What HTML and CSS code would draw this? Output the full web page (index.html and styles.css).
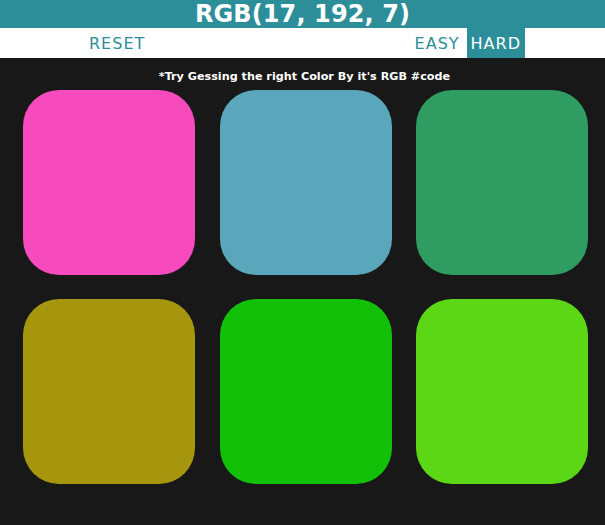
FILE: index.html
```html
<!DOCTYPE html>
<html>
<head>
<meta charset="utf-8">
<link rel="stylesheet" href="styles.css">
</head>
<body>
<h1 class="title">RGB(17, 192, 7)</h1>
<nav class="nav">
  <div class="nav-left"><button class="btn">RESET</button></div>
  <div class="nav-right">
    <button class="btn">EASY</button>
    <button class="btn selected">HARD</button>
  </div>
</nav>
<p class="hint">*Try Gessing the right Color By it's RGB #code</p>
<div class="grid">
  <div class="square sq-pink"></div>
  <div class="square sq-blue"></div>
  <div class="square sq-green"></div>
  <div class="square sq-olive"></div>
  <div class="square sq-answer"></div>
  <div class="square sq-lime"></div>
</div>
</body>
</html>
```
FILE: styles.css
```css
* { box-sizing: border-box; }
html, body { margin: 0; padding: 0; }
body {
  background: #181818;
  font-family: "DejaVu Sans", sans-serif;
  width: 605px;
  height: 525px;
  overflow: hidden;
}
.title {
  margin: 0;
  height: 28px;
  line-height: 28px;
  background: #2c8e99;
  color: #fff;
  font-size: 24px;
  font-weight: bold;
  text-align: center;
  letter-spacing: 0.1px;
}
.nav {
  height: 30px;
  background: #fff;
  display: flex;
  justify-content: space-between;
}
.nav-left { padding-left: 85px; display: flex; }
.nav-right { padding-right: 80px; display: flex; gap: 3px; }
.btn {
  border: none;
  background: #fff;
  color: #2c8e99;
  font-family: "DejaVu Sans", sans-serif;
  font-size: 16px;
  letter-spacing: 1px;
  padding: 0 4px;
  height: 30px;
  margin: 0;
}
.btn.selected { background: #2c8e99; color: #fff; }
.hint {
  margin: 0;
  height: 32px;
  line-height: 37px;
  text-align: center;
  color: #fff;
  font-size: 11.2px;
  font-weight: bold;
  padding-left: 4px;
}
.grid {
  display: grid;
  grid-template-columns: repeat(3, 172px);
  grid-auto-rows: 185px;
  column-gap: 24.5px;
  row-gap: 24px;
  padding-left: 23px;
}
.square { border-radius: 36px; }
.sq-pink { background: #f64abd; }
.sq-blue { background: #5aa7bb; }
.sq-green { background: #2f9d61; }
.sq-olive { background: #a5960d; }
.sq-answer { background: #11c007; }
.sq-lime { background: #5cd716; }
```
